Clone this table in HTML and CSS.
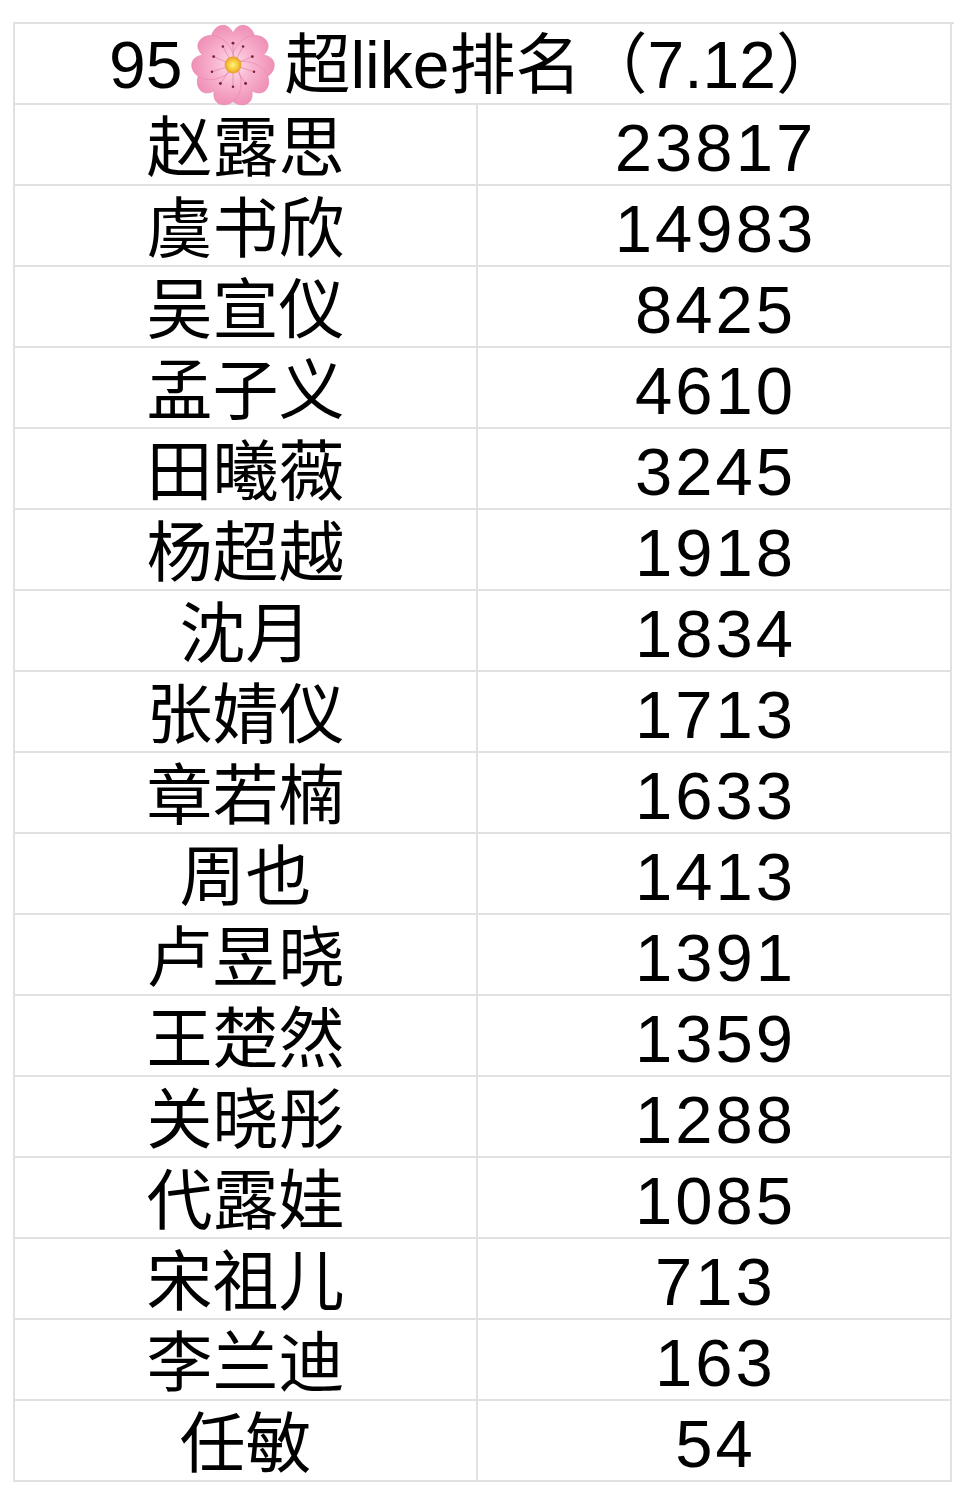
FILE: index.html
```html
<!DOCTYPE html>
<html lang="zh-CN">
<head>
<meta charset="utf-8">
<title>95超like排名</title>
<link rel="stylesheet" href="styles.css">
</head>
<body>
<div class="sheet">
  <div class="cell title">95<svg class="blossom" viewBox="0 0 100 100" width="90" height="84" aria-label="🌸">
      <defs>
        <radialGradient id="petal" cx="50" cy="50" r="50" gradientUnits="userSpaceOnUse">
          <stop offset="0" stop-color="#fde2ec"/>
          <stop offset="0.4" stop-color="#f9b9d2"/>
          <stop offset="1" stop-color="#ef8db5"/>
        </radialGradient>
        <radialGradient id="core" cx="50" cy="50" r="10" gradientUnits="userSpaceOnUse">
          <stop offset="0" stop-color="#fff27c"/>
          <stop offset="0.6" stop-color="#f6c93a"/>
          <stop offset="1" stop-color="#e79a2c"/>
        </radialGradient>
        <path id="pt" d="M50 54 C27 44 17 22 28 8 C35 0 45 1 50 12 C55 1 65 0 72 8 C83 22 73 44 50 54 Z"/>
      </defs>
      <g fill="url(#petal)" stroke="#ea8ab2" stroke-width="0.8">
        <use href="#pt"/>
        <use href="#pt" transform="rotate(72 50 50)"/>
        <use href="#pt" transform="rotate(144 50 50)"/>
        <use href="#pt" transform="rotate(216 50 50)"/>
        <use href="#pt" transform="rotate(288 50 50)"/>
      </g>
      <g stroke="#d9789e" stroke-width="0.7" fill="none">
        <path d="M50 50 L50 24 M50 50 L73 40 M50 50 L65 72 M50 50 L35 72 M50 50 L27 40 M50 50 L62 28 M50 50 L75 58 M50 50 L50 76 M50 50 L25 58 M50 50 L38 28"/>
      </g>
      <g fill="#7a1f3c">
        <circle cx="50" cy="24" r="1.7"/><circle cx="73" cy="40" r="1.7"/><circle cx="65" cy="72" r="1.7"/>
        <circle cx="35" cy="72" r="1.7"/><circle cx="27" cy="40" r="1.7"/><circle cx="62" cy="28" r="1.5"/>
        <circle cx="75" cy="58" r="1.5"/><circle cx="50" cy="76" r="1.5"/><circle cx="25" cy="58" r="1.5"/>
        <circle cx="38" cy="28" r="1.5"/>
      </g>
      <circle cx="50" cy="50" r="10" fill="url(#core)"/>
    </svg>超like排名（7.12）</div>

  <div class="cell name">赵露思</div><div class="cell num">23817</div>
  <div class="cell name">虞书欣</div><div class="cell num">14983</div>
  <div class="cell name">吴宣仪</div><div class="cell num">8425</div>
  <div class="cell name">孟子义</div><div class="cell num">4610</div>
  <div class="cell name">田曦薇</div><div class="cell num">3245</div>
  <div class="cell name">杨超越</div><div class="cell num">1918</div>
  <div class="cell name">沈月</div><div class="cell num">1834</div>
  <div class="cell name">张婧仪</div><div class="cell num">1713</div>
  <div class="cell name">章若楠</div><div class="cell num">1633</div>
  <div class="cell name">周也</div><div class="cell num">1413</div>
  <div class="cell name">卢昱晓</div><div class="cell num">1391</div>
  <div class="cell name">王楚然</div><div class="cell num">1359</div>
  <div class="cell name">关晓彤</div><div class="cell num">1288</div>
  <div class="cell name">代露娃</div><div class="cell num">1085</div>
  <div class="cell name">宋祖儿</div><div class="cell num">713</div>
  <div class="cell name">李兰迪</div><div class="cell num">163</div>
  <div class="cell name">任敏</div><div class="cell num">54</div>
</div>
</body>
</html>
```

FILE: styles.css
```css
html, body {
  margin: 0;
  padding: 0;
  background: #ffffff;
}

body {
  font-family: "Liberation Sans", "Noto Sans CJK SC", sans-serif;
  color: #000000;
}

.sheet {
  margin: 22px 0 0 13px;
  width: 939px;
  display: grid;
  grid-template-columns: 463px 474px;
  grid-auto-rows: 81px;
  border-top: 2px solid #e1e1e1;
  border-left: 2px solid #e1e1e1;
}

.cell {
  box-sizing: border-box;
  border-right: 2px solid #e1e1e1;
  border-bottom: 2px solid #e1e1e1;
  display: flex;
  align-items: center;
  justify-content: center;
  white-space: nowrap;
  line-height: 1;
}

.title {
  grid-column: 1 / span 2;
  font-size: 66px;
  padding: 2px 14px 0 0;
  text-spacing-trim: space-all;
}

.blossom {
  flex: none;
  margin: 0 6px;
}

.name {
  font-size: 66px;
  padding-top: 6px;
}

.num {
  font-size: 67px;
  letter-spacing: 3px;
  padding: 6px 0 0 3px;
}
```
